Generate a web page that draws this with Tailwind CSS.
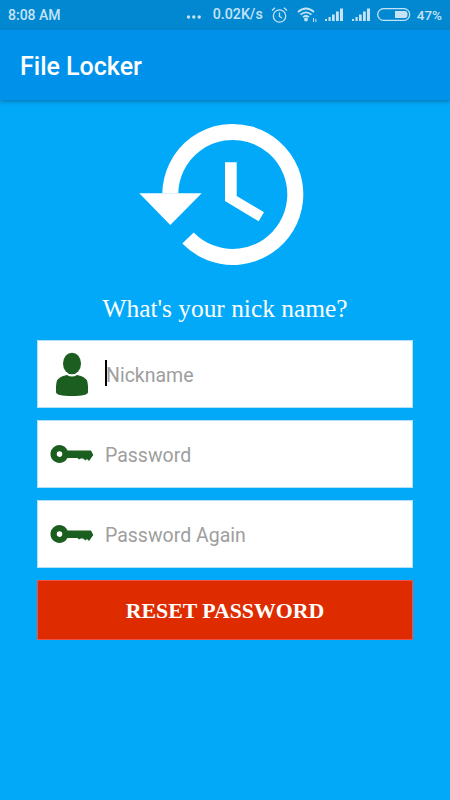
<!DOCTYPE html>
<html>
<head>
<meta charset="utf-8">
<script src="https://cdn.jsdelivr.net/npm/@tailwindcss/browser@4"></script>
</head>
<body class="m-0">
<div class="w-[450px] h-[800px] bg-[#03a9f9] flex flex-col overflow-hidden font-['Roboto',sans-serif]">
  <div class="h-[30px] bg-[#0288d1] flex items-center justify-between pl-2 pr-2 text-[#c5e3f5] text-[14px] font-medium">
    <span>8:08 AM</span>
    <div class="flex items-center">
      <svg class="w-[16px] h-[6px] mr-[11px] mt-[5px]" viewBox="0 0 16 6" fill="#c5e3f5"><circle cx="2.5" cy="3" r="1.7"/><circle cx="7.8" cy="3" r="1.7"/><circle cx="13.2" cy="3" r="1.7"/></svg>
      <span class="text-[14.2px] mr-[8px]">0.02K/s</span>
      <svg class="w-[17px] h-[18px] mr-[9px]" viewBox="0 0 17 18" fill="none" stroke="#c5e3f5" stroke-width="1.3"><circle cx="8.5" cy="10" r="6.2"/><path d="M8.5 6.5V10.5L11 12M1 4.5L4 1.8M16 4.5L13 1.8"/></svg>
      <svg class="w-[20px] h-[17px] mr-[7px]" viewBox="0 0 20 17" fill="none" stroke="#c5e3f5" stroke-width="1.7"><path d="M1 6Q9 -1 17 6M3.5 8.7Q9 4 14.5 8.7M6 11.2Q9 8.8 12 11.2"/><circle cx="9" cy="13.5" r="1.9" fill="#c5e3f5" stroke="none"/><path d="M16.5 12V16M18.8 13V16" stroke-width="1"/></svg>
      <svg class="w-[20px] h-[14px] mr-[7px]" viewBox="0 0 20 14" fill="#c5e3f5"><rect x="1" y="11" width="2" height="2"/><rect x="4.5" y="9" width="2.2" height="4"/><rect x="8" y="6.5" width="2.7" height="6.5"/><rect x="12" y="3.5" width="2.8" height="9.5"/><rect x="16" y="0.5" width="3" height="12.5"/></svg>
      <svg class="w-[20px] h-[14px] mr-[6px]" viewBox="0 0 20 14" fill="#c5e3f5"><rect x="1" y="11" width="2" height="2"/><rect x="4.5" y="9" width="2.2" height="4"/><rect x="8" y="6.5" width="2.7" height="6.5"/><rect x="12" y="3.5" width="2.8" height="9.5"/><rect x="16" y="0.5" width="3" height="12.5"/></svg>
      <svg class="w-[34px] h-[13px] mr-[6px]" viewBox="0 0 34 13"><rect x="0.7" y="0.7" width="32" height="11.6" rx="5.8" fill="none" stroke="#c5e3f5" stroke-width="1.3"/><path d="M18 3H28Q30.5 3 30.5 6.5T28 10H18Z" fill="#c5e3f5"/></svg>
      <span class="text-[13.5px]">47%</span>
    </div>
  </div>
  <div class="h-[70px] bg-[#0091ea] flex items-center pl-5 shadow-[0_2px_4px_rgba(0,0,0,0.25)] relative">
    <span class="text-white text-[25px] font-medium relative top-[2px]">File Locker</span>
  </div>
  <svg class="block mx-auto mt-[22px] w-[178px] h-[145px]" viewBox="136 122 178 145" fill="white">
    <path d="M170.3 193.5A62.5 62.5 0 1 1 188 238" fill="none" stroke="white" stroke-width="16"/>
    <polygon points="139.3,193.3 201.7,193.3 170.3,225"/>
    <polygon points="225,162.3 236.7,162.3 236.7,196 264,212.3 258.7,221.3 225,201"/>
  </svg>
  <div class="mt-[26px] h-[30px] flex items-center justify-center text-white text-[25.4px] font-['Liberation_Serif',serif]">What's your nick name?</div>
  <div class="mt-[17px] mx-[37px] flex flex-col gap-3">
    <div class="h-[68px] bg-white border border-[#b3e0fb] flex items-center">
      <svg class="w-[67px] h-[68px] shrink-0" viewBox="37 340 67 68" fill="#1b5e20">
        <ellipse cx="71" cy="363.5" rx="9" ry="10.8"/>
        <path d="M55 392V386Q55 378 62 376L66 375Q71 378 76 375L80 376Q87 378 87 386V392Q87 396 71 396Q55 396 55 392Z"/>
      </svg>
      <div class="relative text-[19.5px] text-[#9e9e9e]"><span class="absolute left-0 top-[1px] w-[2px] h-[26px] bg-black"></span><span class="relative top-[2px] pl-[1px]">Nickname</span></div>
    </div>
    <div class="h-[68px] bg-white border border-[#b3e0fb] flex items-center">
      <svg class="w-[67px] h-[68px] shrink-0" viewBox="37 420 67 68" fill="#1b5e20">
        <path fill-rule="evenodd" d="M58.5 445A9 9 0 0 1 66.5 450.5H90L92.3 455 88 461 86 459 84.5 460.5 82 458.5H79.5L78 459.5 76.5 458H66.5A9 9 0 1 1 58.5 445ZM58.5 451.3A2.8 2.8 0 1 0 58.51 456.9 2.8 2.8 0 1 0 58.5 451.3Z"/>
      </svg>
      <span class="relative top-[2px] text-[19.5px] text-[#9e9e9e]">Password</span>
    </div>
    <div class="h-[68px] bg-white border border-[#b3e0fb] flex items-center">
      <svg class="w-[67px] h-[68px] shrink-0" viewBox="37 420 67 68" fill="#1b5e20">
        <path fill-rule="evenodd" d="M58.5 445A9 9 0 0 1 66.5 450.5H90L92.3 455 88 461 86 459 84.5 460.5 82 458.5H79.5L78 459.5 76.5 458H66.5A9 9 0 1 1 58.5 445ZM58.5 451.3A2.8 2.8 0 1 0 58.51 456.9 2.8 2.8 0 1 0 58.5 451.3Z"/>
      </svg>
      <span class="relative top-[2px] text-[19.5px] text-[#9e9e9e]">Password Again</span>
    </div>
    <div class="h-[60px] bg-[#de2c00] border border-[#f0524a] flex items-center justify-center text-white text-[21.8px] font-bold font-['Liberation_Serif',serif]"><span class="relative top-[1px]">RESET PASSWORD</span></div>
  </div>
</div>
</body>
</html>
